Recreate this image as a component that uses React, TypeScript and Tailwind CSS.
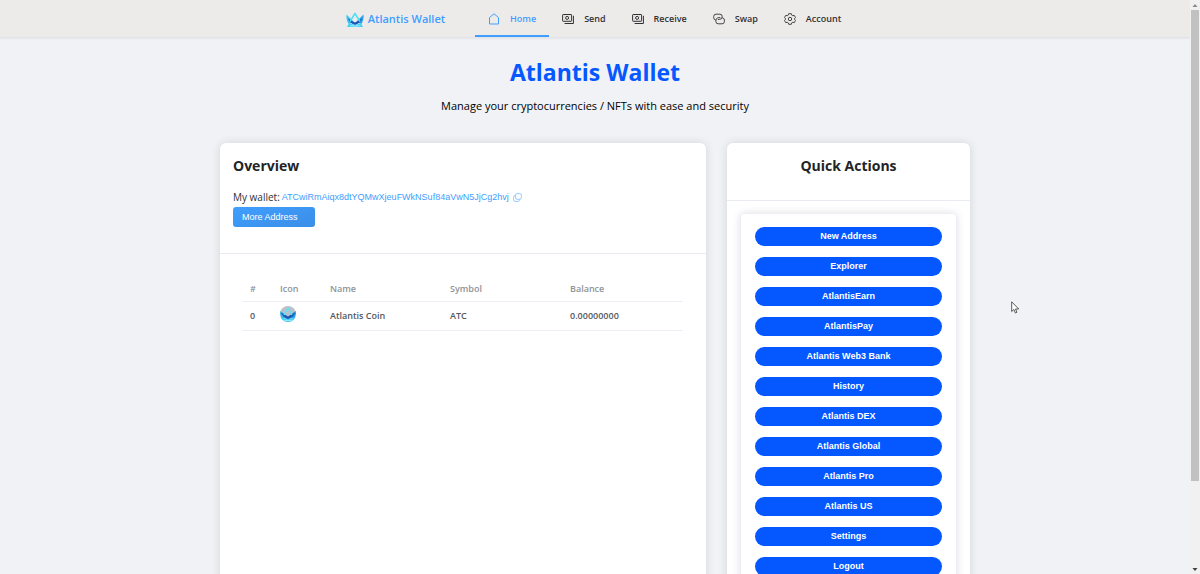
import { useState } from "react";

interface IconProps {
  className?: string;
}

function HomeIcon({ className }: IconProps) {
  return (
    <svg viewBox="0 0 12 12" fill="none" stroke="currentColor" strokeWidth="1" strokeLinejoin="round" className={className}>
      <path d="M1.500 4.500 6 .8l4.500 3.700V11h-9z" />
    </svg>
  );
}

function MoneyIcon({ className }: IconProps) {
  return (
    <svg viewBox="0 0 12 12" fill="none" stroke="currentColor" strokeWidth="1" strokeLinejoin="round" className={className}>
      <rect x=".6" y="1.500" width="9" height="6.800" rx=".6" />
      <path d="M11.400 2.800v7.700H2.600" />
      <circle cx="5.100" cy="4.900" r="1.500" />
      <path d="M2.300 3h.3M7.600 3h.3M2.300 6.800h.3M7.600 6.800h.3" strokeWidth=".7" />
    </svg>
  );
}

function SwapIcon({ className }: IconProps) {
  return (
    <svg viewBox="0 0 12 12" fill="none" stroke="currentColor" strokeWidth=".9" strokeLinecap="round" className={className}>
      <path d="M2.400 7A2.300 2.300 0 0 1 .7 4.800V3.500a2.300 2.300 0 0 1 2.300-2.300h3.900a2.300 2.300 0 0 1 2.300 2.300 2.700 2.700 0 0 1-2.700 2.900H5.200" />
      <path d="M9.600 4.800a2.300 2.300 0 0 1 1.800 2.200v1.500a2.300 2.300 0 0 1-2.300 2.300H5.200a2.300 2.300 0 0 1-2.300-2.300 3.400 3.400 0 0 1 3-3.900h1" />
    </svg>
  );
}

function GearIcon({ className }: IconProps) {
  return (
    <svg viewBox="0 0 12 12" fill="none" stroke="currentColor" strokeWidth=".9" strokeLinejoin="round" className={className}>
      <path d="M4.700.7h2.600l.5 1.500.9.500 1.600-.3 1.200 2.200L10.400 5.800v.4l1.100 1.200-1.200 2.200-1.600-.3-.9.500-.5 1.500H4.700l-.5-1.500-.9-.5-1.600.3L.5 7.400l1.100-1.200v-.4L.5 4.600l1.200-2.200 1.600.3.900-.500z" />
      <circle cx="6" cy="6" r="1.700" />
    </svg>
  );
}

function CopyIcon({ className }: IconProps) {
  return (
    <svg viewBox="0 0 10 10" fill="none" stroke="currentColor" strokeWidth="1" className={className}>
      <rect x="2.800" y=".7" width="6.500" height="6.300" rx="1.800" />
      <path d="M2.800 2.800h-.5A1.600 1.600 0 0 0 .7 4.400v3.300a1.600 1.600 0 0 0 1.600 1.600h3.600A1.600 1.600 0 0 0 7.400 7" />
    </svg>
  );
}

function Logo({ className }: IconProps) {
  return (
    <svg viewBox="0 0 36 30" className={className} aria-hidden="true">
      <path d="M1 4 14 17 6 24C2 18 0 11 1 4z" fill="#3cc4f2" />
      <path d="M35 4 22 17l8 7c4-6 6-13 5-20z" fill="#2f9fe8" />
      <path d="M4 12 18 20l14-8c-2 7-8 11-14 13C12 23 6 19 4 12z" fill="#1857b8" />
      <path d="M6 21 18 25l12-4 4 8H2z" fill="#48d3f5" />
      <path d="M9 26.500c6 .8 12 .8 18 0" fill="none" stroke="#d4f8fd" strokeWidth="1.300" />
      <path d="M8 18 18 2l10 16" fill="none" stroke="#4fdcf6" strokeWidth="3" strokeLinejoin="round" />
    </svg>
  );
}

function CoinIcon({ className }: IconProps) {
  return (
    <svg viewBox="0 0 32 32" className={className} aria-hidden="true">
      <clipPath id="coin">
        <circle cx="16" cy="16" r="16" />
      </clipPath>
      <g clipPath="url(#coin)">
        <rect width="32" height="32" fill="#bcc0c8" />
        <path d="M-2 8 13 19 4 28z" fill="#2cb6ee" />
        <path d="M34 8 19 19l9 9z" fill="#2493e4" />
        <path d="M2 13 16 21l14-8c-2 7-8 11-14 14C10 24 4 20 2 13z" fill="#1857b8" />
        <path d="M0 22 16 26l16-4v10H0z" fill="#48d3f5" />
        <path d="M7 28.500c6 1 12 1 18 0" fill="none" stroke="#c9f6fd" strokeWidth="1.200" />
        <path d="M8 18 16 4l8 14" fill="none" stroke="#5ce3f7" strokeWidth="3" strokeLinejoin="round" />
      </g>
    </svg>
  );
}

const NAV_ITEMS = [
  { label: "Home", icon: HomeIcon },
  { label: "Send", icon: MoneyIcon },
  { label: "Receive", icon: MoneyIcon },
  { label: "Swap", icon: SwapIcon },
  { label: "Account", icon: GearIcon },
];

const ACTIONS = [
  "New Address",
  "Explorer",
  "AtlantisEarn",
  "AtlantisPay",
  "Atlantis Web3 Bank",
  "History",
  "Atlantis DEX",
  "Atlantis Global",
  "Atlantis Pro",
  "Atlantis US",
  "Settings",
  "Logout",
];

const COINS = [{ name: "Atlantis Coin", symbol: "ATC", balance: "0.00000000" }];

const ADDRESS = "ATCwiRmAiqx8dtYQMwXjeuFWkNSuf84aVwN5JjCg2hvj";

function NavBar() {
  const [active, setActive] = useState("Home");

  return (
    <header className="flex h-[38px] shrink-0 justify-center border-b border-[#e2e3e8] bg-[#edebea] pl-2.5 shadow-xs">
      <a href="#home" className="mr-[30px] flex items-center gap-1 pt-0.5 text-[11px] font-semibold text-[#409eff]">
        <Logo className="h-4 w-[18px]" />
        Atlantis Wallet
      </a>
      <nav className="flex">
        {NAV_ITEMS.map(({ label, icon: Icon }) => (
          <a
            key={label}
            href={`#${label.toLowerCase()}`}
            onClick={() => setActive(label)}
            className={`flex items-center gap-2.5 border-y-2 border-t-transparent px-[13px] text-[9px] font-semibold ${active === label ? "border-b-[#409eff] text-[#409eff]" : "border-b-transparent text-[#303133]"}`}
          >
            <Icon className="h-3 w-3" />
            {label}
          </a>
        ))}
      </nav>
    </header>
  );
}

function Overview() {
  return (
    <section className="rounded-md bg-white shadow-[0_0_10px_rgba(0,0,0,0.12)]">
      <div className="h-[111px] border-b border-[#e8ebf1] px-[13px] pt-[13px]">
        <h2 className="text-[14px] leading-5 font-bold text-[#222426]">Overview</h2>
        <p className="mt-[13px] flex items-center text-[10px] leading-4 text-[#303133]">
          My wallet:
          <a href="#address" className="ml-0.5 font-[Liberation_Sans,sans-serif] text-[9px] text-[#409eff]">{ADDRESS}</a>
          <button type="button" aria-label="Copy address" className="ml-1 text-[#8cc4ff]">
            <CopyIcon className="h-[9px] w-[9px]" />
          </button>
        </p>
        <button
          type="button"
          className="mt-0.5 block h-5 rounded-[3px] bg-linear-to-br from-[#409eff] to-[#3a8ee6] pt-px pr-[17px] pl-[9px] font-[Liberation_Sans,sans-serif] text-[9px] text-white"
        >
          More Address
        </button>
      </div>
      <div className="px-[23px] pt-6">
        <table className="w-full table-fixed text-left text-[9px] leading-4 font-semibold">
          <thead className="text-[#909399]">
            <tr className="h-[23px] border-b border-[#ebeef5]">
              <th className="w-[30px] px-[7px] font-semibold">#</th>
              <th className="w-[50px] px-[7px] font-semibold">Icon</th>
              <th className="px-[7px] font-semibold">Name</th>
              <th className="px-[7px] font-semibold">Symbol</th>
              <th className="px-[7px] font-semibold">Balance</th>
            </tr>
          </thead>
          <tbody className="text-[#55585e]">
            {COINS.map((coin, i) => (
              <tr key={coin.symbol} className="h-[29px] border-b border-[#ebeef5]">
                <td className="px-[7px]">{i}</td>
                <td className="px-[7px] pb-1"><CoinIcon className="h-4 w-4" /></td>
                <td className="px-[7px]">{coin.name}</td>
                <td className="px-[7px]">{coin.symbol}</td>
                <td className="px-[7px]">{coin.balance}</td>
              </tr>
            ))}
          </tbody>
        </table>
      </div>
    </section>
  );
}

function QuickActions() {
  return (
    <section className="rounded-md bg-white shadow-[0_0_10px_rgba(0,0,0,0.12)]">
      <div className="h-[58px] border-b border-[#e8ebf1] pt-[13px]">
        <h2 className="text-center text-[14px] leading-5 font-bold text-[#222426]">Quick Actions</h2>
      </div>
      <div className="px-[13px] py-3">
        <div className="flex flex-col gap-[11px] rounded-[4px] border border-[#ebeef5] px-3.5 pt-[13px] pb-4 shadow-[0_0_8px_rgba(0,0,0,0.12)]">
          {ACTIONS.map((action) => (
            <button
              key={action}
              type="button"
              className="h-[19px] rounded-full bg-[#0557ff] pt-px font-[Liberation_Sans,sans-serif] text-[9px] font-bold text-white"
            >
              {action}
            </button>
          ))}
        </div>
      </div>
    </section>
  );
}

function ScrollRail() {
  return (
    <div className="flex w-2.5 shrink-0 flex-col items-center bg-[#f1f1f1]" aria-hidden="true">
      <svg viewBox="0 0 10 10" className="h-2.5 w-2.5 shrink-0"><path d="M5 4 7.500 7h-5z" fill="#8a8a8a" /></svg>
      <div className="h-[82%] w-2 bg-[#c1c1c1]" />
      <svg viewBox="0 0 10 10" className="mt-auto h-2.5 w-2.5 shrink-0"><path d="M5 7 2.500 4h5z" fill="#404040" /></svg>
    </div>
  );
}

export default function App() {
  return (
    <div className="relative flex h-screen overflow-hidden bg-[#f0f2f6] font-[Open_Sans,sans-serif]">
      <div className="flex min-w-0 flex-1 flex-col overflow-hidden">
        <NavBar />
        <main className="mx-auto w-full max-w-[750px]">
          <h1 className="mt-4 text-center text-[23px] leading-9 font-bold text-[#0557ff]">Atlantis Wallet</h1>
          <p className="mt-2 text-center text-[11px] leading-4 text-black">
            Manage your cryptocurrencies / NFTs with ease and security
          </p>
          <div className="mt-[29px] grid grid-cols-[2fr_1fr] gap-[21px]">
            <Overview />
            <QuickActions />
          </div>
        </main>
      </div>
      <ScrollRail />
      <svg viewBox="0 0 9 13" className="absolute top-[301px] left-[1011px] h-[13px] w-[9px]" aria-hidden="true">
        <path d="M.7.800v9.700l2.200-2 1.500 3.500 1.500-.7-1.400-3.300h3.200z" fill="#fff" stroke="#333" strokeWidth=".8" />
      </svg>
    </div>
  );
}
